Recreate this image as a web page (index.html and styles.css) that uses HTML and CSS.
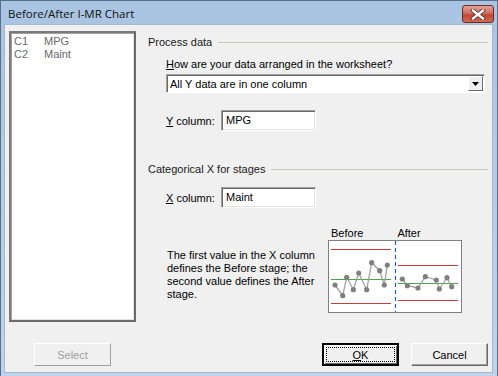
FILE: index.html
```html
<!DOCTYPE html>
<html lang="en">
<head>
  <meta charset="UTF-8">
  <title>Before/After I-MR Chart</title>
  <link rel="stylesheet" href="styles.css">
</head>
<body>
  <div class="window">
    <div class="titlebar">
      <span class="title">Before/After I-MR Chart</span>
      <div class="close-btn">
        <svg width="16" height="11" viewBox="0 0 16 11">
          <path d="M3 1.5 L13 9.5 M13 1.5 L3 9.5" stroke="#4a2a2a" stroke-width="4" stroke-linecap="square"/>
          <path d="M3 1.5 L13 9.5 M13 1.5 L3 9.5" stroke="#fff" stroke-width="2.4" stroke-linecap="square"/>
        </svg>
      </div>
    </div>

    <div class="client">
      <div class="main">
        <div class="listbox">
          <div class="list-row"><span class="col-id">C1</span><span>MPG</span></div>
          <div class="list-row"><span class="col-id">C2</span><span>Maint</span></div>
        </div>

        <div class="panel">
          <div class="group-head"><span>Process data</span><div class="rule"></div></div>

          <div class="indent">
            <div class="label"><u>H</u>ow are your data arranged in the worksheet?</div>
            <div class="combo">
              <span class="combo-text">All Y data are in one column</span>
              <span class="combo-arrow">
                <svg width="7" height="4" viewBox="0 0 7 4"><path d="M0 0 H7 L3.5 4 Z" fill="#000"/></svg>
              </span>
            </div>

            <div class="field-row y-row">
              <span class="field-label"><u>Y</u> column:</span>
              <div class="textbox">MPG</div>
            </div>
          </div>

          <div class="group-head second"><span>Categorical X for stages</span><div class="rule"></div></div>

          <div class="indent">
            <div class="field-row x-row">
              <span class="field-label"><u>X</u> column:</span>
              <div class="textbox">Maint</div>
            </div>

            <div class="explain">
              <p>The first value in the X column defines the Before stage; the second value defines the After stage.</p>
              <div class="chart">
                <div class="chart-labels"><span>Before</span><span>After</span></div>
                <svg class="chart-box" width="134" height="73" viewBox="0 0 134 73">
                  <rect x="0.5" y="0.5" width="133" height="72" fill="#fff" stroke="#808080"/>
                  <line x1="3" y1="9.5" x2="63" y2="9.5" stroke="#c04040"/>
                  <line x1="3" y1="63.5" x2="63" y2="63.5" stroke="#c04040"/>
                  <line x1="3" y1="39.5" x2="63" y2="39.5" stroke="#4aa34a"/>
                  <line x1="70" y1="25.5" x2="130" y2="25.5" stroke="#c04040"/>
                  <line x1="70" y1="60.5" x2="130" y2="60.5" stroke="#c04040"/>
                  <line x1="70" y1="43.5" x2="130" y2="43.5" stroke="#4aa34a"/>
                  <line x1="67.5" y1="1" x2="67.5" y2="72" stroke="#1f5fae" stroke-width="1.2" stroke-dasharray="4 3"/>
                  <polyline fill="none" stroke="#a0a0a0" stroke-width="1.3"
                    points="7,45 14.7,55.7 18.7,37.3 25.3,49.7 30.7,33 38.7,49.7 43.7,22.7 51.7,30.7 56.3,45 59.3,25"/>
                  <polyline fill="none" stroke="#a0a0a0" stroke-width="1.3"
                    points="74.3,39 79.3,45.7 90,48 97.3,36.7 108.3,40 111.3,49 119,37.7 123.7,46.7"/>
                  <g fill="#808080">
                    <circle cx="7" cy="45" r="2.6"/><circle cx="14.7" cy="55.7" r="2.6"/>
                    <circle cx="18.7" cy="37.3" r="2.6"/><circle cx="25.3" cy="49.7" r="2.6"/>
                    <circle cx="30.7" cy="33" r="2.6"/><circle cx="38.7" cy="49.7" r="2.6"/>
                    <circle cx="43.7" cy="22.7" r="2.6"/><circle cx="51.7" cy="30.7" r="2.6"/>
                    <circle cx="56.3" cy="45" r="2.6"/><circle cx="59.3" cy="25" r="2.6"/>
                    <circle cx="74.3" cy="39" r="2.6"/><circle cx="79.3" cy="45.7" r="2.6"/>
                    <circle cx="90" cy="48" r="2.6"/><circle cx="97.3" cy="36.7" r="2.6"/>
                    <circle cx="108.3" cy="40" r="2.6"/><circle cx="111.3" cy="49" r="2.6"/>
                    <circle cx="119" cy="37.7" r="2.6"/><circle cx="123.7" cy="46.7" r="2.6"/>
                  </g>
                </svg>
              </div>
            </div>
          </div>
        </div>
      </div>

      <div class="buttons">
        <div class="btn disabled">Select</div>
        <div class="btn-spacer"></div>
        <div class="btn default"><span class="focus"><u>O</u>K</span></div>
        <div class="btn">Cancel</div>
      </div>
    </div>
  </div>
</body>
</html>
```

FILE: styles.css
```css
body {
  margin: 0;
  background: #fff;
  font-family: "Liberation Sans", Arial, sans-serif;
  font-size: 11px;
  color: #000;
}
.window {
  width: 498px;
  height: 376px;
  box-sizing: border-box;
  background: linear-gradient(#a9c4e2, #bed4ec);
  border: 1px solid #5a6f8a;
  border-bottom: none;
  display: flex;
  flex-direction: column;
}
.titlebar {
  height: 23px;
  display: flex;
  align-items: center;
  justify-content: space-between;
  padding: 0 3px 0 7px;
}
.title {
  font-family: "Open Sans", "Liberation Sans", sans-serif;
  font-size: 11.5px;
  color: #111;
  margin-top: 1px;
}
.close-btn {
  width: 30px;
  height: 16px;
  margin-top: 3px;
  border: 1px solid #6e2b24;
  border-radius: 3px;
  background: linear-gradient(#e3a195, #cf6f5f 45%, #c24631 55%, #d26a52);
  display: flex;
  align-items: center;
  justify-content: center;
}
.client {
  flex: 1;
  margin: 0 4px 3px 3px;
  background: #f0f0f0;
  border: 1px solid #a8b8cc;
  display: flex;
  flex-direction: column;
}
.main {
  display: flex;
  padding: 6px 0 0 4px;
}
.listbox {
  width: 127px;
  height: 291px;
  box-sizing: border-box;
  background: #fff;
  border: 2px solid;
  border-color: #7a7a7a #6a6a6a #6a6a6a #7a7a7a;
  box-shadow: inset 1px 1px 0 #a0a0a0, inset -1px -1px 0 #e3e3e3;
  padding: 2px 3px;
  color: #6a6a6a;
}
.list-row {
  height: 13px;
  line-height: 13px;
}
.col-id {
  display: inline-block;
  width: 30px;
}
.panel {
  flex: 1;
  padding: 4px 0 0 12px;
}
.group-head {
  display: flex;
  align-items: center;
  gap: 6px;
  height: 14px;
  color: #1a1a1a;
}
.group-head.second {
  margin-top: 31px;
}
.rule {
  flex: 1;
  height: 0;
  border-top: 1px solid #c4c9c0;
  margin-right: 4px;
}
.indent {
  padding-left: 18px;
  padding-right: 7px;
}
.label {
  margin-top: 9px;
  height: 14px;
}
.combo {
  margin-top: 2px;
  height: 19px;
  box-sizing: border-box;
  background: #fff;
  border: 1px solid;
  border-color: #a0a0a0 #fff #fff #a0a0a0;
  box-shadow: inset 1px 1px 0 #696969;
  display: flex;
  align-items: center;
  justify-content: space-between;
  padding-left: 3px;
}
.combo-arrow {
  width: 15px;
  height: 15px;
  box-sizing: border-box;
  margin-right: 1px;
  background: #f0f0f0;
  border: 1px solid;
  border-color: #fff #696969 #696969 #fff;
  display: flex;
  align-items: center;
  justify-content: center;
}
.field-row {
  display: flex;
  align-items: center;
  margin-top: 17px;
}
.field-row.x-row {
  margin-top: 11px;
}
.field-label {
  width: 55px;
}
.textbox {
  width: 95px;
  height: 21px;
  box-sizing: border-box;
  background: #fff;
  border: 1px solid;
  border-color: #a0a0a0 #fff #fff #a0a0a0;
  box-shadow: inset 1px 1px 0 #696969, inset -1px -1px 0 #e3e3e3;
  padding: 3px 0 0 4px;
}
.explain {
  display: flex;
  align-items: flex-end;
  margin-top: 19px;
}
.explain p {
  width: 155px;
  margin: 0 6px 12px 1px;
  line-height: 13px;
}
.chart-labels {
  display: flex;
  gap: 34px;
  padding-left: 3px;
  height: 13px;
  line-height: 13px;
}
.chart-box {
  display: block;
}
.buttons {
  display: flex;
  margin-top: auto;
  padding: 0 0 6px 29px;
  gap: 12px;
}
.btn-spacer {
  width: 187px;
}
.btn {
  width: 77px;
  height: 23px;
  box-sizing: border-box;
  background: #f0f0f0;
  border: 1px solid;
  border-color: #fff #696969 #696969 #fff;
  box-shadow: inset -1px -1px 0 #a0a0a0;
  display: flex;
  align-items: center;
  justify-content: center;
}
.btn.disabled {
  color: #a0a0a0;
  border-color: #fff #a0a0a0 #a0a0a0 #fff;
  box-shadow: none;
}
.btn.default {
  border: 2px solid #000;
  border-color: #000;
  box-shadow: inset 1px 1px 0 #fff, inset -1px -1px 0 #696969;
}
.focus {
  display: flex;
  align-items: center;
  justify-content: center;
  width: 67px;
  height: 13px;
  border: 1px dotted #000;
}
```
